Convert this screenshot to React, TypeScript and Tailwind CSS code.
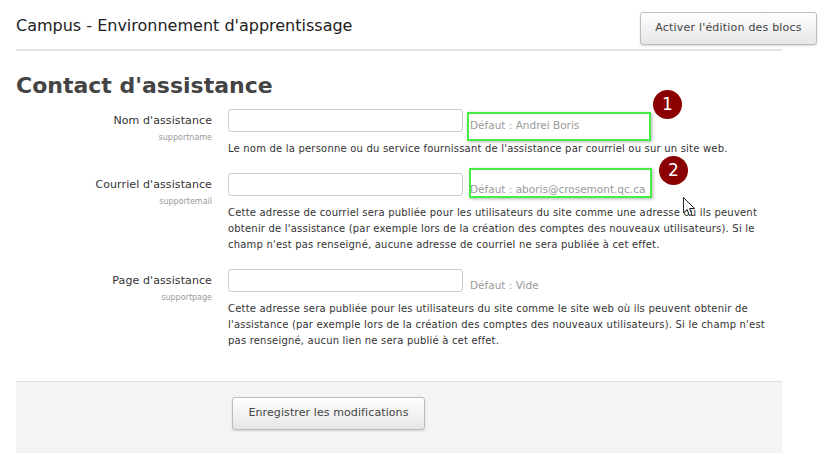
import React from 'react';

const font = { fontFamily: '"DejaVu Sans", Verdana, sans-serif' };

type Row = {
  label: string;
  name: string;
  def: string;
  lines: string[];
};

const ROWS: Row[] = [
  {
    label: "Nom d'assistance",
    name: 'supportname',
    def: 'Défaut : Andrei Boris',
    lines: ["Le nom de la personne ou du service fournissant de l'assistance par courriel ou sur un site web."],
  },
  {
    label: "Courriel d'assistance",
    name: 'supportemail',
    def: 'Défaut : aboris@crosemont.qc.ca',
    lines: [
      'Cette adresse de courriel sera publiée pour les utilisateurs du site comme une adresse où ils peuvent',
      "obtenir de l'assistance (par exemple lors de la création des comptes des nouveaux utilisateurs). Si le",
      "champ n'est pas renseigné, aucune adresse de courriel ne sera publiée à cet effet.",
    ],
  },
  {
    label: "Page d'assistance",
    name: 'supportpage',
    def: 'Défaut : Vide',
    lines: [
      'Cette adresse sera publiée pour les utilisateurs du site comme le site web où ils peuvent obtenir de',
      "l'assistance (par exemple lors de la création des comptes des nouveaux utilisateurs). Si le champ n'est",
      'pas renseigné, aucun lien ne sera publié à cet effet.',
    ],
  },
];

const Badge = ({ n, className }: { n: number; className: string }) => (
  <div
    className={`absolute w-[29px] h-[29px] rounded-full bg-[#8b0000] text-white flex items-center justify-center text-[17px] ${className}`}
  >
    {n}
  </div>
);

const Cursor = () => (
  <svg className="absolute left-[683px] top-[197px]" width="13" height="20" viewBox="0 0 13 20">
    <path d="M0.5 0.5 L0.5 16 L4 12.5 L6.5 18.5 L9 17.5 L6.5 11.5 L11.5 11.5 Z" fill="#fff" stroke="#222" strokeWidth="1" />
  </svg>
);

const btn =
  'bg-gradient-to-b from-white to-[#e6e6e6] border border-[#bcbcbc] rounded-[3px] shadow-[0_1px_2px_rgba(0,0,0,0.15)] text-[#444]';

export default function App() {
  return (
    <div className="relative w-[826px] h-[466px] bg-white text-[#333] overflow-hidden" style={font}>
      {/* Header */}
      <div className="flex items-start justify-between pl-4 pr-[9px] pt-3">
        <div className="text-[16px] text-[#222] pt-[2px]">Campus - Environnement d'apprentissage</div>
        <button className={`${btn} h-[33px] w-[177px] text-[11px] tracking-[0.2px]`}>Activer l'édition des blocs</button>
      </div>
      <div className="ml-4 mt-[4px] w-[766px] h-[2px] bg-[#e6e6e6]" />

      <h2 className="ml-4 mt-[21px] text-[22px] font-bold text-[#444] leading-[28px]">Contact d'assistance</h2>

      {/* Form rows */}
      <div className="ml-4 mt-[9px] flex flex-col gap-4">
        {ROWS.map((row) => (
          <div key={row.name} className="flex">
            <div className="w-[196px] text-right pt-[4px]">
              <div className="text-[11px] tracking-[0.1px] leading-[15px]">{row.label}</div>
              <div className="text-[8px] text-[#999] mt-[4px]">{row.name}</div>
            </div>
            <div className="ml-4">
              <div className="flex items-start h-[23px]">
                <input className="w-[235px] h-[23px] border border-[#ccc] rounded-[3px] bg-white" />
                <div className="ml-[7px] text-[10.5px] leading-[14px] text-[#999] mt-[9px]">{row.def}</div>
              </div>
              <div className="mt-[9px] text-[10px] tracking-[0.2px] leading-[16px] text-[#333] whitespace-nowrap">
                {row.lines.map((l) => (
                  <div key={l}>{l}</div>
                ))}
              </div>
            </div>
          </div>
        ))}
      </div>

      {/* Footer */}
      <div className="absolute left-4 top-[381px] w-[766px] h-[72px] bg-[#f4f4f4] border-t border-[#e0e0e0] pl-[216px] pt-[15px]">
        <button className={`${btn} h-[33px] w-[193px] text-[11px] tracking-[0.1px]`}>Enregistrer les modifications</button>
      </div>

      {/* Annotations */}
      <div className="absolute left-[467px] top-[112px] w-[184px] h-[29px] border-2 border-[#44ee44] shadow-[1px_1px_3px_rgba(0,0,0,0.3)]" />
      <div className="absolute left-[469px] top-[168px] w-[183px] h-[30px] border-2 border-[#44ee44] shadow-[1px_1px_3px_rgba(0,0,0,0.3)]" />
      <Badge n={1} className="left-[653px] top-[90px]" />
      <Badge n={2} className="left-[659px] top-[156px]" />
      <Cursor />
    </div>
  );
}
